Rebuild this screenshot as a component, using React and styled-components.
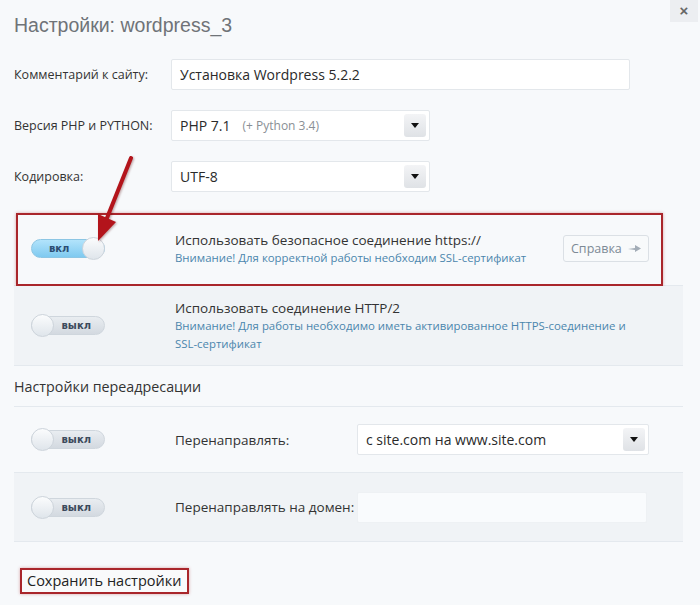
import React from "react";
import styled, { createGlobalStyle, css } from "styled-components";

const GlobalStyle = createGlobalStyle`
  html, body {
    margin: 0;
    padding: 0;
    background: #f7f9fb;
  }
  body {
    font-family: "Open Sans", "Noto Sans", sans-serif;
    color: #333;
  }
`;

const Page = styled.div`
  position: relative;
  width: 700px;
  height: 605px;
  overflow: hidden;
  background: #f7f9fb;
`;

const Close = styled.button`
  position: absolute;
  top: 0;
  right: 2px;
  width: 28px;
  height: 22px;
  border: none;
  background: #eceef1;
  color: #666;
  font-size: 15px;
  font-weight: bold;
  line-height: 20px;
  padding: 0;
`;

const Dialog = styled.div`
  width: 669px;
  padding-left: 14px;
`;

const Title = styled.h1`
  margin: 0;
  padding-top: 14px;
  height: 59px;
  box-sizing: border-box;
  font-family: "Liberation Sans", Arial, sans-serif;
  font-weight: normal;
  font-size: 19.5px;
  color: #6f7378;
`;

const FieldRow = styled.div`
  display: grid;
  grid-template-columns: 157px auto;
  align-items: center;
  margin-bottom: 20px;
`;

const Label = styled.label`
  font-size: 12.5px;
  color: #333;
`;

const Field = styled.div`
  position: relative;
  box-sizing: border-box;
  width: ${(p) => p.w}px;
  height: 31px;
  background: ${(p) => (p.faint ? "#f9fbfd" : "#fff")};
  border: 1px solid ${(p) => (p.faint ? "#eef1f4" : "#e3e7eb")};
  border-radius: 2px;
  display: flex;
  align-items: center;
  padding-left: 8px;
  font-size: 14px;
  color: #2a2a2a;
`;

const Hint = styled.span`
  margin-left: 12px;
  font-size: 12px;
  color: #8a8f95;
`;

const DropBtn = styled.span`
  position: absolute;
  right: 3px;
  top: 3px;
  width: 22px;
  height: 23px;
  border-radius: 3px;
  background: linear-gradient(#f3f4f6, #dfe2e6);
  display: flex;
  align-items: center;
  justify-content: center;
  &::after {
    content: "";
    border-left: 4px solid transparent;
    border-right: 4px solid transparent;
    border-top: 5px solid #111;
  }
`;

const Select = ({ w, children }) => (
  <Field w={w}>
    {children}
    <DropBtn />
  </Field>
);

const OptionRow = styled.div`
  position: relative;
  display: grid;
  grid-template-columns: 161px 1fr auto;
  align-items: center;
  min-height: ${(p) => p.h}px;
  padding-right: 34px;
  background: ${(p) => (p.shade ? "#f0f3f6" : "transparent")};
  border-bottom: 1px solid #e4e9ee;
  ${(p) =>
    p.marked &&
    css`
      &::after {
        content: "";
        position: absolute;
        left: 2px;
        right: 20px;
        top: 1px;
        bottom: -1px;
        border: 2px solid #a9262b;
        box-shadow: 0 0 3px rgba(169, 38, 43, 0.4);
        pointer-events: none;
      }
    `}
`;

const ToggleCell = styled.div`
  padding-left: 17px;
`;

const Track = styled.div`
  position: relative;
  width: 74px;
  height: 19px;
  border-radius: 10px;
  box-sizing: border-box;
  display: flex;
  align-items: center;
  font-size: 10px;
  font-weight: bold;
  font-family: "DejaVu Sans", sans-serif;
  ${(p) =>
    p.on
      ? css`
          background: linear-gradient(#b2e3fb, #7fcaf0);
          border: 1px solid #8cc6e4;
          color: #2c4d72;
          justify-content: flex-start;
          padding-left: 17px;
        `
      : css`
          background: linear-gradient(#e9edf1, #d3d9e0);
          border: 1px solid #cfd6dd;
          color: #3c4a5c;
          justify-content: flex-end;
          padding-right: 13px;
        `}
`;

const Knob = styled.span`
  position: absolute;
  top: -3px;
  ${(p) => (p.on ? "right: -1px;" : "left: -1px;")}
  width: 23px;
  height: 23px;
  border-radius: 50%;
  background: linear-gradient(#fbfcfd, #dfe5eb);
  border: 1px solid #cdd4db;
  box-sizing: border-box;
`;

const Toggle = ({ on }) => (
  <Track on={on}>
    {on ? "вкл" : "выкл"}
    <Knob on={on} />
  </Track>
);

const TextCell = styled.div`
  max-width: 462px;
`;

const Main = styled.div`
  font-size: 13.5px;
  line-height: 18px;
  color: #333;
  white-space: nowrap;
`;

const Sub = styled.div`
  font-size: 11.4px;
  line-height: 18px;
  color: #4b86ad;
`;

const HelpBtn = styled.button`
  display: flex;
  align-items: center;
  justify-content: space-between;
  box-sizing: border-box;
  width: 86px;
  height: 27px;
  padding: 0 7px 0 7px;
  border: 1px solid #dbe0e5;
  border-radius: 3px;
  background: #f8fafb;
  font-family: inherit;
  font-size: 12.5px;
  color: #7d8a96;
`;

const RedirectRow = styled(OptionRow)`
  grid-template-columns: 161px 182px 1fr;
`;

const SectionTitle = styled.div`
  height: 40px;
  display: flex;
  align-items: center;
  font-size: 14.3px;
  color: #333;
  border-bottom: 1px solid #e4e9ee;
`;

const Footer = styled.div`
  padding: 26px 0 0 6px;
`;

const SaveBtn = styled.button`
  border: 2px solid #a9262b;
  box-shadow: 0 0 3px rgba(169, 38, 43, 0.4);
  background: #f9fafb;
  padding: 1px 6px 2px 5px;
  font-family: inherit;
  font-size: 14.5px;
  color: #222;
`;

const Arrow = styled.svg`
  position: absolute;
  left: 85px;
  top: 150px;
  filter: drop-shadow(1px 1px 1px rgba(80, 0, 0, 0.35));
`;

export default function App() {
  return (
    <Page>
      <GlobalStyle />
      <Close>×</Close>
      <Dialog>
        <Title>Настройки: wordpress_3</Title>
        <FieldRow>
          <Label>Комментарий к сайту:</Label>
          <Field w={459}>Установка Wordpress 5.2.2</Field>
        </FieldRow>
        <FieldRow>
          <Label>Версия PHP и PYTHON:</Label>
          <Select w={259}>
            PHP 7.1<Hint>(+ Python 3.4)</Hint>
          </Select>
        </FieldRow>
        <FieldRow>
          <Label>Кодировка:</Label>
          <Select w={259}>UTF-8</Select>
        </FieldRow>

        <OptionRow h={73} marked>
          <ToggleCell>
            <Toggle on />
          </ToggleCell>
          <TextCell>
            <Main>Использовать безопасное соединение https://</Main>
            <Sub>Внимание! Для корректной работы необходим SSL-сертификат</Sub>
          </TextCell>
          <HelpBtn>
            Справка
            <svg width="13" height="9" viewBox="0 0 13 9">
              <path d="M0 5 L7 4 L7 1 L13 4.5 L7 8 L7 6 Z" fill="#a3adb7" />
            </svg>
          </HelpBtn>
        </OptionRow>
        <OptionRow h={79} shade>
          <ToggleCell>
            <Toggle />
          </ToggleCell>
          <TextCell>
            <Main>Использовать соединение HTTP/2</Main>
            <Sub>
              Внимание! Для работы необходимо иметь активированное HTTPS-соединение и
              SSL-сертификат
            </Sub>
          </TextCell>
        </OptionRow>

        <SectionTitle>Настройки переадресации</SectionTitle>

        <RedirectRow h={65}>
          <ToggleCell>
            <Toggle />
          </ToggleCell>
          <Main>Перенаправлять:</Main>
          <Select w={292}>с site.com на www.site.com</Select>
        </RedirectRow>
        <RedirectRow h={68} shade>
          <ToggleCell>
            <Toggle />
          </ToggleCell>
          <Main>Перенаправлять на домен:</Main>
          <Field w={290} faint />
        </RedirectRow>

        <Footer>
          <SaveBtn>Сохранить настройки</SaveBtn>
        </Footer>
      </Dialog>

      <Arrow width="60" height="100" viewBox="0 0 60 100">
        <line x1="46" y1="8" x2="22" y2="68" stroke="#b3141b" strokeWidth="4" strokeLinecap="round" />
        <polygon points="13,91 31,72 13,64" fill="#b3141b" />
      </Arrow>
    </Page>
  );
}
